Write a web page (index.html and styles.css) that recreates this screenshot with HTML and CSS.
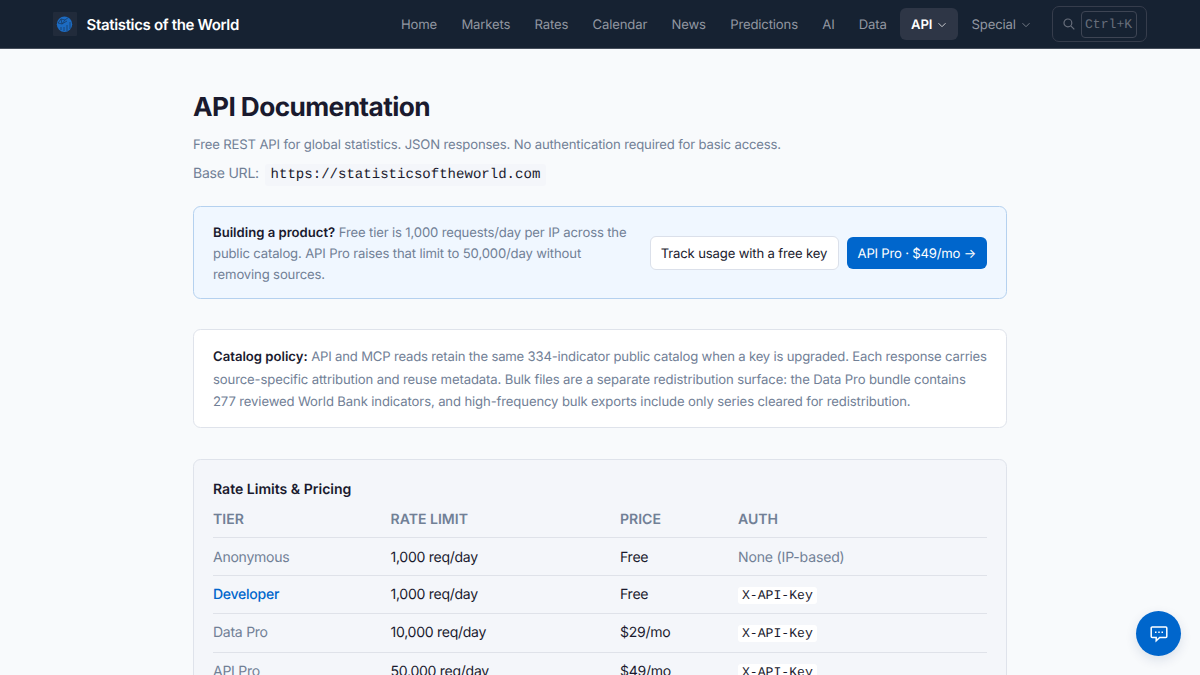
FILE: index.html
```html
<!DOCTYPE html>
<html lang="en">
<head>
  <meta charset="UTF-8">
  <meta name="viewport" content="width=device-width, initial-scale=1.0">
  <title>API Documentation - Statistics of the World</title>
  <link rel="stylesheet" href="styles.css">
</head>
<body>
<header class="site-header">
  <div class="header-inner">
    <a class="brand" href="#">
      <svg class="logo" viewBox="0 0 24 24">
        <rect width="24" height="24" rx="1" fill="#212b3b"/>
        <circle cx="11.5" cy="12.2" r="7.7" fill="#1c6bc2"/>
        <path d="M5 11l3-4 4 1 4-3M8 7l1 5 5-3M5 11l4 1 3-4M8 18v-3M11 19v-4M14 19v-6M17 17v-7" fill="none" stroke="#173c68" stroke-width=".8"/>
      </svg>
      <span>Statistics of the World</span>
    </a>
    <nav class="nav">
      <a href="#">Home</a>
      <a href="#">Markets</a>
      <a href="#">Rates</a>
      <a href="#">Calendar</a>
      <a href="#">News</a>
      <a href="#">Predictions</a>
      <a href="#">AI</a>
      <a href="#">Data</a>
      <a href="#" class="active">API <svg class="chevron" viewBox="0 0 10 10"><path d="M1.5 3.2L5 6.7l3.5-3.5"/></svg></a>
      <a href="#">Special <svg class="chevron" viewBox="0 0 10 10"><path d="M1.5 3.2L5 6.7l3.5-3.5"/></svg></a>
    </nav>
    <button class="search">
      <svg viewBox="0 0 12 12"><circle cx="4.9" cy="4.9" r="3.9"/><path d="M7.8 7.8l3.5 3.5"/></svg>
      <kbd>Ctrl+K</kbd>
    </button>
  </div>
</header>

<main class="container">
  <h1>API Documentation</h1>
  <p class="intro">Free REST API for global statistics. JSON responses. No authentication required for basic access.</p>
  <p class="base-url">Base URL: <code>https://statisticsoftheworld.com</code></p>

  <section class="card banner">
    <p><strong>Building a product?</strong> Free tier is 1,000 requests/day per IP across the public catalog. API Pro raises that limit to 50,000/day without removing sources.</p>
    <div class="actions">
      <a class="btn btn-outline" href="#">Track usage with a free key</a>
      <a class="btn btn-primary" href="#">API Pro · $49/mo →</a>
    </div>
  </section>

  <section class="card policy">
    <p><strong>Catalog policy:</strong> API and MCP reads retain the same 334-indicator public catalog when a key is upgraded. Each response carries source-specific attribution and reuse metadata. Bulk files are a separate redistribution surface: the Data Pro bundle contains 277&nbsp;reviewed World Bank indicators, and high-frequency bulk exports include only series cleared for redistribution.</p>
  </section>

  <section class="card pricing">
    <h2>Rate Limits &amp; Pricing</h2>
    <table>
      <colgroup>
        <col class="col-tier"><col class="col-limit"><col class="col-price"><col>
      </colgroup>
      <thead>
        <tr><th>TIER</th><th>RATE LIMIT</th><th>PRICE</th><th>AUTH</th></tr>
      </thead>
      <tbody>
        <tr class="first"><td class="muted">Anonymous</td><td>1,000 req/day</td><td>Free</td><td class="muted auth">None (IP-based)</td></tr>
        <tr><td class="link">Developer</td><td>1,000 req/day</td><td>Free</td><td><code>X-API-Key</code></td></tr>
        <tr class="paid"><td class="muted">Data Pro</td><td>10,000 req/day</td><td>$29/mo</td><td><code>X-API-Key</code></td></tr>
        <tr class="paid"><td class="muted">API Pro</td><td>50,000 req/day</td><td>$49/mo</td><td><code>X-API-Key</code></td></tr>
      </tbody>
    </table>
  </section>
</main>

<button class="chat" aria-label="Chat">
  <svg viewBox="0 0 18 18"><path d="M2.2 2h13.6a1 1 0 0 1 1 1v8.4a1 1 0 0 1-1 1H9.7l-3.5 3.3v-3.3h-4a1 1 0 0 1-1-1V3a1 1 0 0 1 1-1z"/><path d="M5 7.3h1.5M8.25 7.3h1.5M11.5 7.3H13"/></svg>
</button>
</body>
</html>
```
FILE: styles.css
```css
* {
  box-sizing: border-box;
}
body {
  margin: 0;
  height: 675px;
  overflow: hidden;
  background: #f8fafc;
  color: #1a1a2e;
  font-family: Inter, sans-serif;
  font-size: 13.125px;
  letter-spacing: -0.15px;
  text-rendering: geometricPrecision;
}
a {
  color: inherit;
  text-decoration: none;
}
h1, h2, p {
  margin: 0;
}
.site-header {
  height: 49px;
  background: #162232;
  border-bottom: 1px solid #454e5b;
}
.header-inner {
  height: 48px;
  padding: 0 53px;
  display: flex;
  align-items: center;
}
.brand {
  display: flex;
  align-items: center;
  gap: 9.5px;
  color: #fff;
  font-size: 15px;
  font-weight: 600;
  letter-spacing: -0.34px;
}
.logo {
  width: 24px;
  height: 24px;
}
.nav {
  display: flex;
  margin-left: auto;
  gap: 1.8px;
  color: #9297a1;
}
.nav a {
  display: flex;
  align-items: center;
  height: 32px;
  padding: 1px 11.25px 0;
  border-radius: 6px;
}
.nav .active {
  background: #2e3646;
  color: #fff;
  font-weight: 600;
}
.chevron {
  width: 10px;
  height: 10px;
  margin-left: 5px;
  fill: none;
  stroke: currentColor;
  stroke-width: 1;
  opacity: 0.75;
}
.search {
  display: flex;
  align-items: center;
  gap: 6px;
  width: 95px;
  height: 36px;
  margin-left: 10px;
  padding: 0 0 0 10px;
  border: 1px solid #363d4c;
  border-radius: 7px;
  background: none;
  color: #686e7b;
  text-rendering: geometricPrecision;
}
.search svg {
  width: 12px;
  height: 12px;
  fill: none;
  stroke: currentColor;
  stroke-width: 1.2;
}
.search kbd {
  height: 27px;
  padding: 0 4px 0 3px;
  border: 1px solid #3e4554;
  border-radius: 4px;
  font: 13.125px/25px "Liberation Mono", monospace;
}
.container {
  width: 814px;
  margin: 0 auto;
  padding-top: 43px;
}
h1 {
  font-size: 26.25px;
  font-weight: 700;
  line-height: 32px;
  letter-spacing: -0.6px;
}
.intro {
  margin-top: 11px;
  color: #718096;
  line-height: 21px;
}
.base-url {
  margin-top: 7px;
  color: #718096;
  font-size: 14.063px;
  line-height: 21px;
  letter-spacing: -0.25px;
}
code {
  font-family: "Liberation Mono", monospace;
  color: #1a1a2e;
  border-radius: 3px;
  letter-spacing: 0;
}
.base-url code {
  padding: 3px 6px;
  margin-left: 2px;
  background: #f4f6fa;
}
.card {
  padding: 15px 19px;
  border: 1px solid #dfe3eb;
  border-radius: 7.5px;
}
.card strong {
  color: #1a1a2e;
  font-weight: 600;
  letter-spacing: 0;
}
.banner {
  display: flex;
  align-items: center;
  gap: 15px;
  height: 93px;
  margin-top: 20px;
  background: #f0f7ff;
  border-color: #b5d1ef;
  color: #718096;
  line-height: 20.8px;
}
.banner p {
  flex: 1;
  padding-top: 4px;
}
.actions {
  display: flex;
  align-items: center;
  gap: 8px;
}
.btn {
  display: flex;
  align-items: center;
  justify-content: center;
  height: 32px;
  padding-top: 3px;
  border-radius: 6px;
  white-space: nowrap;
}
.btn-outline {
  width: 189px;
  height: 34px;
  background: #fff;
  border: 1px solid #dbe0ea;
  color: #1a1a2e;
}
.btn-primary {
  width: 140.5px;
  background: #0066cc;
  color: #fff;
  letter-spacing: -0.2px;
}
.policy {
  height: 99px;
  margin-top: 30px;
  padding: 16px 18px 0 19px;
  background: #fff;
  color: #718096;
  line-height: 22.5px;
  letter-spacing: -0.13px;
}
.policy p::first-line {
  letter-spacing: -0.18px;
}
.pricing {
  height: 300px;
  margin-top: 31px;
  padding-top: 19px;
  background: #f4f6fa;
}
h2 {
  font-size: 14.063px;
  font-weight: 600;
  line-height: 21px;
  letter-spacing: 0;
}
table {
  width: 100%;
  table-layout: fixed;
  border-collapse: separate;
  border-spacing: 0;
  font-size: 14.063px;
  letter-spacing: -0.28px;
}
.col-tier {
  width: 177.5px;
}
.col-limit {
  width: 229.5px;
}
.col-price {
  width: 118px;
}
th, td {
  padding: 0;
  height: 38px;
  border-bottom: 1px solid #dfe2e9;
  text-align: left;
  font-weight: 400;
}
th {
  padding-top: 2px;
  color: #718096;
  font-weight: 600;
  letter-spacing: 0;
}
.first td {
  padding-top: 1px;
}
.paid td {
  height: 38.5px;
}
.muted {
  color: #718096;
}
.auth {
  letter-spacing: -0.17px;
}
td.link {
  color: #0066cc;
  font-weight: 500;
}
td code {
  padding: 1px 4px;
  background: #fff;
  font-size: 13.125px;
}
.chat {
  position: fixed;
  right: 19px;
  bottom: 19px;
  display: flex;
  align-items: center;
  justify-content: center;
  width: 45px;
  height: 45px;
  padding: 0;
  border: 0;
  border-radius: 50%;
  background: #0066cc;
  box-shadow: 0 4px 12px rgba(0, 40, 100, 0.12);
}
.chat svg {
  width: 18px;
  height: 18px;
  fill: none;
  stroke: #fff;
  stroke-width: 1.5;
}
```
